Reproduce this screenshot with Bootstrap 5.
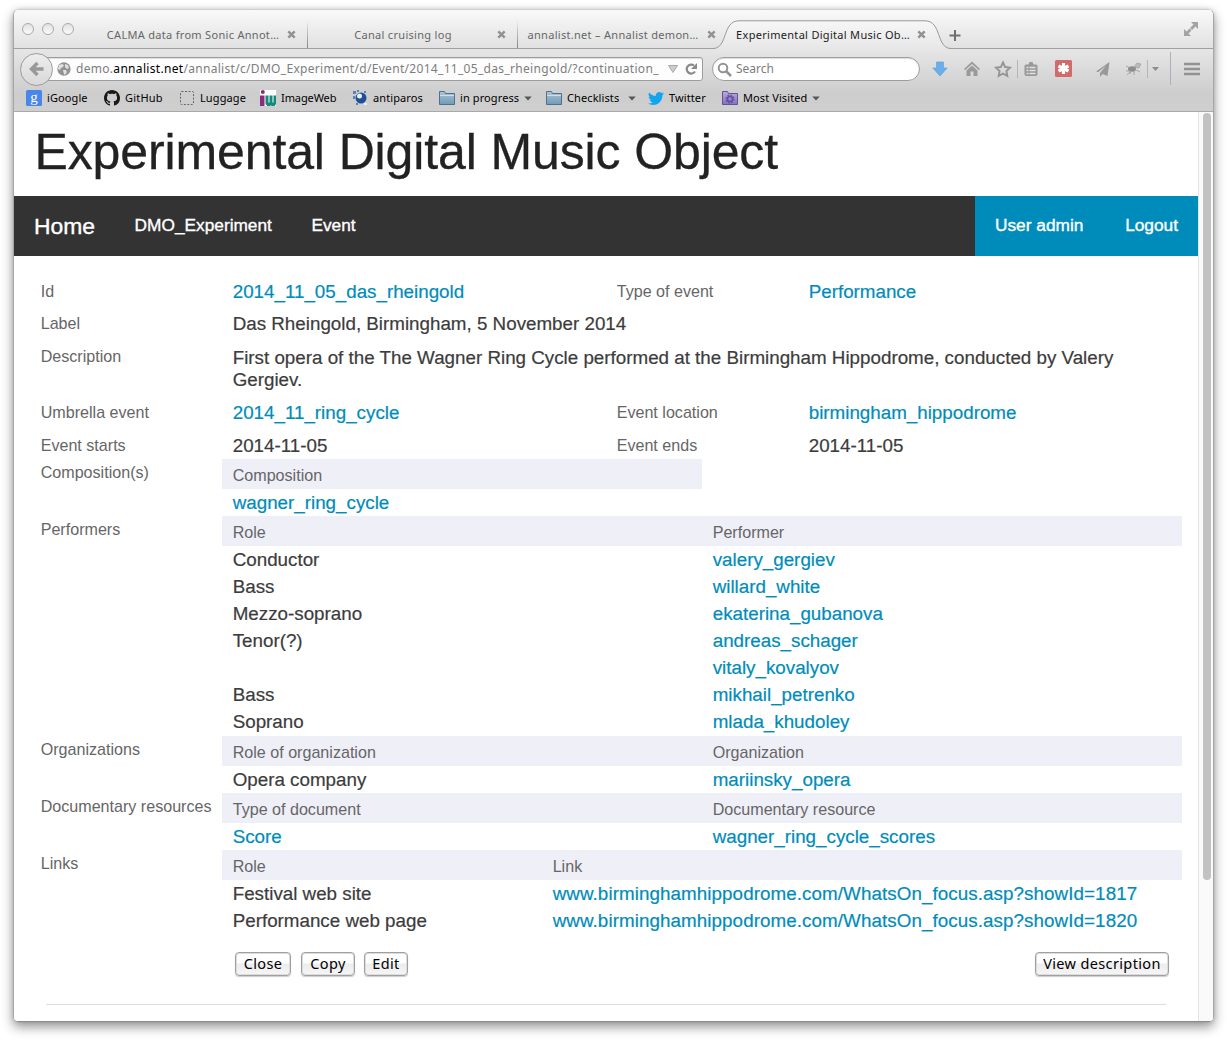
<!DOCTYPE html>
<html lang="en">
<head>
<meta charset="utf-8">
<title>Experimental Digital Music Object</title>
<link href="https://cdn.jsdelivr.net/npm/bootstrap@5.3.0/dist/css/bootstrap.min.css" rel="stylesheet">
<script src="https://cdn.jsdelivr.net/npm/bootstrap@5.3.0/dist/js/bootstrap.bundle.min.js"></script>
<style>
body{background:#fff;font-family:"Liberation Sans",Helvetica,Arial,sans-serif;color:#444;height:1041px;overflow:hidden;padding:9px 13px}
a{text-decoration:none;color:#008cba}
.win{width:1201px;height:1013px;border:1px solid #a6a6a6;border-top-color:#cfcfcf;border-bottom-color:#8a8a8a;border-radius:6px 6px 5px 5px;box-shadow:0 5px 12px rgba(0,0,0,.42),0 0 4px rgba(0,0,0,.12);overflow:hidden}
.chrome-ui{font-family:"Noto Sans","Open Sans",sans-serif;font-size:11px;height:102px;background:linear-gradient(#f8f8f8 0,#e2e2e2 38px,#e6e6e6 39px,#cdcdcd 84px,#cfcfcf 101px);border-bottom:1px solid #a9a9a9}
.strip{height:39px;border-bottom:1px solid #a0a0a0;background:linear-gradient(#f9f9f9,#e1e1e1)}
.lights{width:83px;padding:13px 0 0 8px;gap:8px}
.lights i{width:12px;height:12px;border:1px solid #aaa;border-radius:50%;background:linear-gradient(#e2e2e2,#fafafa)}
.wtab{width:210px;height:39px;padding:10px 10px 0 8px;color:#666;line-height:26px}
.wtab .ttl{width:176px;letter-spacing:.3px}
.wtab.sep::after{content:"";position:absolute;right:-1px;top:10px;width:1px;height:28px;background:linear-gradient(rgba(140,140,140,0),#858585)}
.wtab.on{color:#1c1c1c}
.wtab .shape{position:absolute;left:-14px;top:10px}
.wtab svg.x{margin-left:6px}
.bar{height:40px}
.back{width:33px;height:33px;border:1px solid #9b9b9b;border-radius:50%;background:linear-gradient(#ededed,#d9d9d9);margin-left:6px;z-index:2}
.url{width:664px;height:24px;margin-left:-14px;border:1px solid #9d9d9d;border-radius:3px;background:#fdfdfd;padding-left:13px;font-size:12px;color:#7d7d7d;box-shadow:inset 0 1px 1px #ddd}
.url .addr{width:587px;letter-spacing:.31px;margin-left:5px}
.url b{font-weight:400;color:#000}
.find{width:208px;height:24px;margin-left:9px;border:1px solid #9d9d9d;border-radius:12px;background:#fff;padding-left:4px;font-size:12px;color:#7d7d7d;box-shadow:inset 0 1px 1px #ddd}
.tools{width:292px;height:43px}
.bms{height:18px;padding-left:12px;color:#000;letter-spacing:.1px}
.bms>span{gap:5px;height:18px}
.bms>span:nth-child(1){width:78px}.bms>span:nth-child(2){width:75px;letter-spacing:.2px}.bms>span:nth-child(3){width:81px}.bms>span:nth-child(4){width:92px;letter-spacing:-.1px}.bms>span:nth-child(5){width:87px}.bms>span:nth-child(6){width:107px}.bms>span:nth-child(7){width:102px}.bms>span:nth-child(8){width:74px}
.page{width:1184px;height:910px}
.title-h{height:84px;padding:6px 20px 0 20.500px;font-size:50px;line-height:68px;color:#222;margin:0;font-weight:400;letter-spacing:-.12px;-webkit-text-stroke:.3px #222}
.topnav{height:60px;background:#333;-webkit-text-stroke:.35px #fff;font-size:17.3px;color:#fff}
.topnav a{color:#fff}
.topnav .home{font-size:22.900px}
.topnav .lnk{margin-left:39.500px}
.topnav .admin{background:#008cba;width:223px;height:60px}
.form-area{margin-left:16px;width:1152px;padding-top:19px}
.lb{font-size:16.1px;color:#666}
.v{font-size:18.8px;color:#3c3c3c}
.v,.gr{-webkit-text-stroke:.2px}
.fr{line-height:22px;min-height:32.4px}
.fr>div{padding:5px 10px 0 10.700px}
.fr>.v{padding-top:6px}
.fr.desc{min-height:56.4px}
.fr.desc .v{padding-top:7px;margin-bottom:-3px}
.fr.starts{min-height:30px}
.grp>.lb{padding-left:10.700px;line-height:27px}
.gh{background:#efeff8;height:30px;line-height:32px;font-size:16.1px;color:#666}
.gh>div,.gr>div{padding-left:10.700px}
.gr{height:27.15px;line-height:27.800px;font-size:18.8px;color:#3c3c3c}
.gr.one{height:27px}
.gr .web{letter-spacing:.08px}
.mb{font-family:"Noto Sans","Open Sans",sans-serif;font-size:14.500px;letter-spacing:.36px;line-height:21px;height:24px;color:#000;border:1px solid #a0a0a0;border-radius:4px;padding:0;background:linear-gradient(#fff 0,#fff 45%,#ececec 50%,#f6f6f6);box-shadow:0 1px 1px rgba(0,0,0,.2),inset 0 0 0 1px #dcdcdc}
.b1{width:56px}.b2{width:54px;margin-left:10px}.b3{width:44px;margin-left:9px}.b4{width:134px}
.acts{margin:18px 13px 0 205px}
.rule{margin:28px 16px 0;border-top:1px solid #ddd}
.sb{width:15px;height:910px;background:#fafafa;border-left:1px solid #e4e4e4;padding:1px 0 0 4px}
.sb div{width:8px;height:767px;border-radius:4px;background:#c2c2c2}
</style>
</head>
<body>
<svg width="0" height="0" class="position-absolute">
<defs>
<symbol id="cx" viewBox="0 0 9 9"><path d="M1.3 1.3l6.4 6.4M7.7 1.3L1.3 7.700" stroke="#929292" stroke-width="2.4"/></symbol>
<symbol id="car" viewBox="0 0 8 5"><path d="M.3.5h7.400L4 4.500z" fill="#555"/></symbol>
<linearGradient id="fg" x2="0" y2="1"><stop stop-color="#a9c6d8"/><stop offset="1" stop-color="#7199b6"/></linearGradient>
<linearGradient id="pg" x2="0" y2="1"><stop stop-color="#b9abdc"/><stop offset="1" stop-color="#8570bb"/></linearGradient>
<linearGradient id="tg" x2="0" y2="1"><stop stop-color="#f7f7f7"/><stop offset="1" stop-color="#e6e6e6"/></linearGradient>
<symbol id="fold" viewBox="0 0 16 16"><path d="M.5 14.500v-13h5l1 2h9v11z" fill="url(#fg)" stroke="#4f7288"/><path d="M1 5.500h14" stroke="#cfe0ea"/></symbol>
</defs>
</svg>
<div class="win">
<div class="chrome-ui">
  <div class="strip d-flex">
    <div class="lights d-flex"><i></i><i></i><i></i></div>
    <div class="wtab sep d-flex align-items-center position-relative"><span class="ttl text-center text-nowrap">CALMA data from Sonic Annot…</span><svg class="x" width="9" height="9"><use href="#cx"/></svg></div>
    <div class="wtab sep d-flex align-items-center position-relative"><span class="ttl text-center text-nowrap">Canal cruising log</span><svg class="x" width="9" height="9"><use href="#cx"/></svg></div>
    <div class="wtab d-flex align-items-center position-relative"><span class="ttl text-center text-nowrap">annalist.net – Annalist demon…</span><svg class="x" width="9" height="9"><use href="#cx"/></svg></div>
    <div class="wtab on d-flex align-items-center position-relative"><svg class="shape" width="240" height="30"><path d="M0 28.500C15 28.500 9 .8 26 .8H212C229 .8 223 28.500 238 28.500V30H0z" fill="url(#tg)"/><path d="M0 28.500C15 28.500 9 .8 26 .8H212C229 .8 223 28.500 238 28.500" fill="none" stroke="#979797"/></svg><span class="ttl text-center text-nowrap position-relative">Experimental Digital Music Ob…</span><svg class="x position-relative" width="9" height="9"><use href="#cx"/></svg></div>
    <svg class="mt-1" width="262" height="34"><path d="M18 16v11M12.500 21.500h11" stroke="#707070" stroke-width="2"/><g fill="#a3a3a3"><path d="M268 8h-7l2.500 2.500-3.500 3.500 2 2 3.500-3.500L268 15zM254 22v-7l2.500 2.500 3-3 2 2-3 3L261 22z" transform="translate(-7)"/></g></svg>
  </div>
  <div class="bar d-flex align-items-center">
    <div class="back d-flex align-items-center justify-content-center"><svg width="16" height="16" viewBox="0 0 16 16"><path d="M14.500 8H3M8.500 2L2.500 8l6 6" fill="none" stroke="#999" stroke-width="3.400"/></svg></div>
    <div class="url d-flex align-items-center"><svg width="14" height="14" viewBox="0 0 14 14" class="ms-1"><circle cx="7" cy="7" r="6.700" fill="#929292"/><path d="M2 3l3-1 2 1-1 2-2 1-1 2-2-1zM8 2l3 1 1 3-2 1-2-2zM6 8l3 0 1 2-2 3-1-1z" fill="#e0e0e0"/></svg><span class="addr text-nowrap overflow-hidden">demo.<b>annalist.net</b>/annalist/c/DMO_Experiment/d/Event/2014_11_05_das_rheingold/?continuation_</span><svg width="34" height="14" class="ms-2"><path d="M.5 3.500h9L5 10.500z" fill="#ccc" stroke="#aaa"/><path d="M27 9.500A4.500 4.500 0 1 1 26 3.500" fill="none" stroke="#8a8a8a" stroke-width="2.200"/><path d="M29 1v6h-6z" fill="#8a8a8a"/></svg></div>
    <div class="find d-flex align-items-center"><svg width="15" height="15" viewBox="0 0 15 15"><circle cx="6" cy="6" r="4.300" fill="none" stroke="#939393" stroke-width="2"/><path d="M9 9l5 5" stroke="#939393" stroke-width="2.500"/></svg><span class="ms-1">Search</span></div>
    <svg class="tools" viewBox="920 48 292 43">
      <path d="M936.500 62h7v6h3.700L940 76l-7.200-8h3.700z" fill="#6aaeea" stroke="#5a9cd8" stroke-width=".6"/>
      <g fill="#999"><path d="M972 61.500l8 7.500-1 1.200-7-6.300-7 6.300-1-1.200z"/><path d="M966.500 70.500l5.500-5 5.500 5V76h-4v-4.500h-3V76h-4z"/>
      <path d="M1026 64.500h2.500l1-2.500h3l1 2.500h2.500q1.500 0 1.500 1.500v8q0 2-2 2h-9q-2 0-2-2v-8q0-1.500 1.500-1.500z"/></g>
      <path d="M1026.500 67.500h2m1 0h6m-9 3h2m1 0h6m-9 3h2m1 0h6" stroke="#e2e2e2" stroke-width="1.300"/>
      <path d="M1003 62.500l2.100 4.500 4.900.6-3.600 3.400.9 4.900-4.300-2.400-4.300 2.400.9-4.900-3.600-3.400 4.900-.6z" fill="none" stroke="#959595" stroke-width="1.900"/>
      <path d="M1017.500 60v18M1147.500 60v18" stroke="#b5b5b5"/>
      <rect x="1055" y="60" width="17" height="17" rx="1.500" fill="#cf6b6b"/><path d="M1063.500 63v11M1058.500 66l10 5M1058.500 71l10-5" stroke="#fff" stroke-width="3.200"/>
      <path d="M1096 71.500L1109.500 62l-2 14-5-2-2.500 3v-4l6-7.500-7.500 6.500z" fill="#999"/>
      <g stroke="#999" fill="#8d8d8d"><ellipse cx="1132" cy="69" rx="4" ry="2.800" stroke="none"/><path d="M1126 66l4 2M1126 71h4M1130 74l1-3M1134 75l0-4M1140 72l-4-2M1135 68l4-4M1127 75l3-3" fill="none" stroke-width=".8"/><path d="M1134 67l3-4 4 1-2 4z" fill="#bbb" stroke-width=".6"/></g>
      <path d="M1152 67h7l-3.500 4z" fill="#8d8d8d"/><path d="M1170.500 52v33" stroke="#aab1ba"/>
      <path d="M1184 64h16M1184 69h16M1184 74h16" stroke="#929292" stroke-width="2.600"/>
    </svg>
  </div>
  <div class="bms d-flex text-nowrap">
    <span class="d-flex align-items-center"><svg width="16" height="16"><rect width="16" height="16" rx="1.500" fill="#4a86e8"/><text x="8" y="11.500" text-anchor="middle" font-family="Liberation Serif" font-size="15" fill="#fff">g</text></svg>iGoogle</span>
    <span class="d-flex align-items-center"><svg width="16" height="16" viewBox="0 0 16 16"><path fill="#1b1817" d="M8 0C3.580 0 0 3.580 0 8c0 3.540 2.290 6.530 5.470 7.590.4.070.55-.17.55-.38 0-.19-.01-.82-.01-1.490-2.010.37-2.530-.49-2.690-.94-.09-.23-.48-.94-.82-1.130-.28-.15-.68-.52-.01-.53.630-.01 1.080.58 1.230.82.720 1.210 1.870.87 2.330.66.070-.52.28-.87.51-1.070-1.780-.2-3.640-.89-3.640-3.950 0-.87.31-1.590.82-2.150-.08-.2-.36-1.020.08-2.120 0 0 .67-.21 2.200.82.640-.18 1.320-.27 2-.27s1.360.09 2 .27c1.530-1.040 2.200-.82 2.200-.82.440 1.100.16 1.920.08 2.120.51.56.82 1.270.82 2.150 0 3.070-1.870 3.750-3.650 3.950.29.250.54.730.54 1.480 0 1.070-.01 1.930-.01 2.200 0 .21.15.46.55.38A8.010 8.010 0 0 0 16 8c0-4.420-3.580-8-8-8z"/></svg>GitHub</span>
    <span class="d-flex align-items-center"><svg width="16" height="16"><rect x="1.500" y="1.500" width="13" height="13" fill="none" stroke="#666" stroke-dasharray="2 1.500" rx="1"/></svg>Luggage</span>
    <span class="d-flex align-items-center"><svg width="16" height="16"><path d="M0 0h16v16H0z" fill="#fff"/><circle cx="2.800" cy="2" r="2" fill="#8a2b7b"/><path d="M0 5.500h4.500V16H0z" fill="#8a2b7b"/><path d="M5.500 5.500h3v7h1v-7h3v7h1v-7H16V14l-1.500 2h-3l-.6-1-.6 1h-3L5.500 14z" fill="#138a7a"/></svg>ImageWeb</span>
    <span class="d-flex align-items-center"><svg width="16" height="16"><circle cx="9" cy="8" r="5.500" fill="#1f4f96"/><circle cx="7.500" cy="6" r="2.500" fill="#e8f0fa"/><path d="M1 1h3v3H1zM5 0h2v2H5zM1 6h2v3H1zM12 1h2v2h-2zM4 13h2v2H4z" fill="#5d82b5"/><path d="M12 13h3v2h-3z" fill="#eee"/></svg>antiparos</span>
    <span class="d-flex align-items-center"><svg width="16" height="16"><use href="#fold"/></svg>in progress<svg width="8" height="5"><use href="#car"/></svg></span>
    <span class="d-flex align-items-center"><svg width="16" height="16"><use href="#fold"/></svg>Checklists<svg width="8" height="5" class="ms-1"><use href="#car"/></svg></span>
    <span class="d-flex align-items-center"><svg width="16" height="16" viewBox="0 0 16 16"><path fill="#10a5ee" d="M5.030 15c6.040 0 9.340-5 9.340-9.330 0-.14 0-.28-.01-.42A6.700 6.700 0 0 0 16 3.540a6.500 6.500 0 0 1-1.890.52 3.300 3.300 0 0 0 1.450-1.820 6.500 6.500 0 0 1-2.090.79A3.290 3.290 0 0 0 7.880 6.030 9.320 9.320 0 0 1 1.110 2.600 3.290 3.290 0 0 0 2.130 6.980 3.200 3.200 0 0 1 .64 6.580v.04a3.290 3.290 0 0 0 2.630 3.220 3.200 3.200 0 0 1-.86.11 3.200 3.200 0 0 1-.62-.06 3.290 3.290 0 0 0 3.070 2.280A6.590 6.590 0 0 1 .78 13.580a6 6 0 0 1-.78-.04A9.340 9.340 0 0 0 5.030 15"/></svg>Twitter</span>
    <span class="d-flex align-items-center"><svg width="16" height="16"><path d="M.5 14.500v-13h5l1 2h9v11z" fill="url(#pg)" stroke="#66529c"/><circle cx="8" cy="9" r="2.600" fill="none" stroke="#6450a8" stroke-width="1.800"/><circle cx="8" cy="9" r="4" fill="none" stroke="#6450a8" stroke-width="1.200" stroke-dasharray="1.600 1.540"/></svg>Most Visited<svg width="8" height="5"><use href="#car"/></svg></span>
  </div>
</div>
<div class="d-flex bg-white">
<div class="page">
  <h1 class="title-h text-nowrap">Experimental Digital Music Object</h1>
  <nav class="topnav d-flex align-items-center justify-content-between">
    <div class="d-flex align-items-center ps-3 ms-1"><a class="home" href="#">Home</a><a class="lnk" href="#">DMO_Experiment</a><a class="lnk" href="#">Event</a></div>
    <div class="admin d-flex align-items-center justify-content-between ps-3 pe-3"><a class="ms-1" href="#">User admin</a><a class="me-1" href="#">Logout</a></div>
  </nav>
  <main class="form-area">
    <div class="row g-0 fr"><div class="col-2 lb">Id</div><div class="col-4 v"><a href="#">2014_11_05_das_rheingold</a></div><div class="col-2 lb">Type of event</div><div class="col-4 v"><a href="#">Performance</a></div></div>
    <div class="row g-0 fr"><div class="col-2 lb">Label</div><div class="col-10 v">Das Rheingold, Birmingham, 5 November 2014</div></div>
    <div class="row g-0 fr desc"><div class="col-2 lb">Description</div><div class="col-10 v">First opera of the The Wagner Ring Cycle performed at the Birmingham Hippodrome, conducted by Valery Gergiev.</div></div>
    <div class="row g-0 fr"><div class="col-2 lb">Umbrella event</div><div class="col-4 v"><a href="#">2014_11_ring_cycle</a></div><div class="col-2 lb">Event location</div><div class="col-4 v"><a href="#">birmingham_hippodrome</a></div></div>
    <div class="row g-0 fr starts"><div class="col-2 lb">Event starts</div><div class="col-4 v">2014-11-05</div><div class="col-2 lb">Event ends</div><div class="col-4 v">2014-11-05</div></div>
    <div class="row g-0 grp"><div class="col-2 lb">Composition(s)</div><div class="col-10">
      <div class="row g-0"><div class="col-6"><div class="gh"><div>Composition</div></div><div class="gr one"><div><a href="#">wagner_ring_cycle</a></div></div></div></div>
    </div></div>
    <div class="row g-0 grp"><div class="col-2 lb">Performers</div><div class="col-10">
      <div class="row g-0 gh"><div class="col-6">Role</div><div class="col-6">Performer</div></div>
      <div class="row g-0 gr"><div class="col-6">Conductor</div><div class="col-6"><a href="#">valery_gergiev</a></div></div>
      <div class="row g-0 gr"><div class="col-6">Bass</div><div class="col-6"><a href="#">willard_white</a></div></div>
      <div class="row g-0 gr"><div class="col-6">Mezzo-soprano</div><div class="col-6"><a href="#">ekaterina_gubanova</a></div></div>
      <div class="row g-0 gr"><div class="col-6">Tenor(?)</div><div class="col-6"><a href="#">andreas_schager</a></div></div>
      <div class="row g-0 gr"><div class="col-6"></div><div class="col-6"><a href="#">vitaly_kovalyov</a></div></div>
      <div class="row g-0 gr"><div class="col-6">Bass</div><div class="col-6"><a href="#">mikhail_petrenko</a></div></div>
      <div class="row g-0 gr"><div class="col-6">Soprano</div><div class="col-6"><a href="#">mlada_khudoley</a></div></div>
    </div></div>
    <div class="row g-0 grp"><div class="col-2 lb">Organizations</div><div class="col-10">
      <div class="row g-0 gh"><div class="col-6">Role of organization</div><div class="col-6">Organization</div></div>
      <div class="row g-0 gr one"><div class="col-6">Opera company</div><div class="col-6"><a href="#">mariinsky_opera</a></div></div>
    </div></div>
    <div class="row g-0 grp"><div class="col-2 lb">Documentary resources</div><div class="col-10">
      <div class="row g-0 gh"><div class="col-6">Type of document</div><div class="col-6">Documentary resource</div></div>
      <div class="row g-0 gr one"><div class="col-6"><a href="#">Score</a></div><div class="col-6"><a href="#">wagner_ring_cycle_scores</a></div></div>
    </div></div>
    <div class="row g-0 grp"><div class="col-2 lb">Links</div><div class="col-10">
      <div class="row g-0 gh"><div class="col-4">Role</div><div class="col-8">Link</div></div>
      <div class="row g-0 gr"><div class="col-4">Festival web site</div><div class="col-8"><a class="web" href="#">www.birminghamhippodrome.com/WhatsOn_focus.asp?showId=1817</a></div></div>
      <div class="row g-0 gr"><div class="col-4">Performance web page</div><div class="col-8"><a class="web" href="#">www.birminghamhippodrome.com/WhatsOn_focus.asp?showId=1820</a></div></div>
    </div></div>
    <div class="acts d-flex">
      <button class="mb b1">Close</button><button class="mb b2">Copy</button><button class="mb b3">Edit</button><button class="mb b4 ms-auto">View description</button>
    </div>
    <div class="rule"></div>
  </main>
</div>
<div class="sb"><div></div></div>
</div>
</div>
</body>
</html>
